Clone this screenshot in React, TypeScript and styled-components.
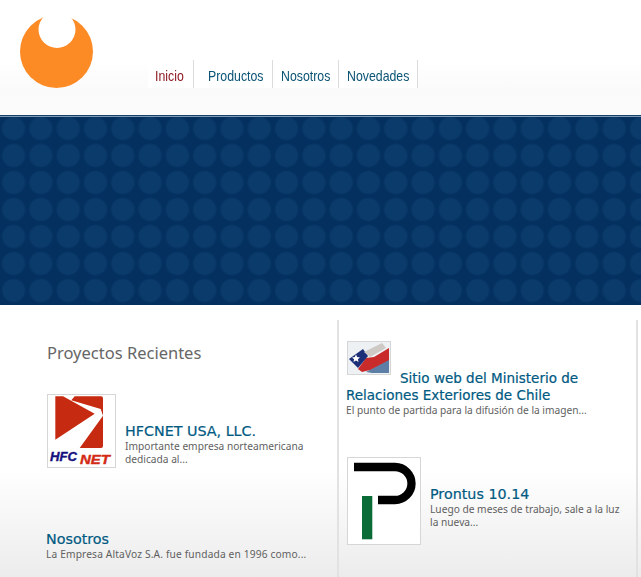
import React from 'react';
import styled, { createGlobalStyle } from 'styled-components';

const GlobalStyle = createGlobalStyle`
  html, body {
    margin: 0;
    padding: 0;
    background: #fff;
    overflow: hidden;
  }
  body {
    font-family: "DejaVu Sans", sans-serif;
  }
`;

const Page = styled.div`
  width: 641px;
  height: 577px;
  display: flex;
  flex-direction: column;
  overflow: hidden;
`;

const Header = styled.header`
  height: 115px;
  flex: none;
  display: flex;
  align-items: flex-start;
  background: linear-gradient(#fff 0, #fff 60px, #fafafa 92px, #fbfbfb 115px);
`;

const LogoBox = styled.a`
  width: 148px;
  height: 92px;
  flex: none;
  display: flex;
  padding: 15px 0 0 20px;
  box-sizing: border-box;
`;

const Nav = styled.nav`
  display: flex;
  margin-top: 60px;
  height: 28px;
  background: #fff;
`;

const NavItem = styled.a<{ $active?: boolean; $left: number; $width: number }>`
  width: ${(p) => p.$width}px;
  box-sizing: border-box;
  display: flex;
  align-items: center;
  padding: 3px 0 0 ${(p) => p.$left}px;
  border-right: 1px solid #dcdcdc;
  font-family: "Liberation Sans", sans-serif;
  font-size: 14.5px;
  color: ${(p) => (p.$active ? '#8e1b22' : '#0b5475')};
`;

// the original face is a narrow grotesque, none is installed
const NavLabel = styled.span`
  display: inline-block;
  transform: scaleX(0.85);
  transform-origin: left center;
  white-space: nowrap;
`;

const Band = styled.div`
  height: 190px;
  flex: none;
  box-sizing: border-box;
  border-top: 1px solid #17406b;
  box-shadow: inset 0 1px 0 #7f9ab5;
  background-color: #03305f;
  background-image: radial-gradient(circle at 13.6px 13.5px, #0b3b6b 10.5px, #03305f 12.5px);
  background-size: 27.3px 27px;
  background-position: 0 -1px;
`;

const Content = styled.main`
  flex: 1;
  display: flex;
  padding-top: 15px;
  background: linear-gradient(#fff 0, #fff 165px, #ececec 272px);
`;

const LeftColumn = styled.section`
  width: 337px;
  flex: none;
  box-sizing: border-box;
  padding: 23px 20px 0 46px;
`;

const RightColumn = styled.section`
  width: 301px;
  flex: none;
  box-sizing: border-box;
  padding: 21px 10px 0 7px;
  border-left: 2px solid #e2e2e2;
  border-right: 2px solid #e2e2e2;
`;

const Heading = styled.h2`
  margin: 0 0 31px 1px;
  font-family: "Noto Sans", sans-serif;
  font-size: 16.5px;
  line-height: 20px;
  font-weight: 400;
  color: #666;
`;

const Story = styled.article<{ $top?: number; $left?: number }>`
  display: flex;
  align-items: flex-start;
  gap: 9px;
  margin: ${(p) => p.$top ?? 0}px 0 0 ${(p) => p.$left ?? 0}px;
`;

const StoryText = styled.div`
  padding-top: 29px;
`;

const Thumb = styled.div<{ $w: number; $h: number }>`
  width: ${(p) => p.$w}px;
  height: ${(p) => p.$h}px;
  flex: none;
  box-sizing: border-box;
  border: 1px solid #d6d6d6;
  background: #fff;
  display: flex;
`;

const InlineThumb = styled(Thumb)`
  display: inline-flex;
  vertical-align: 9px;
  margin: 0 9px 0 1px;
`;

const Title = styled.h3<{ $size?: number }>`
  margin: 0;
  font-family: "DejaVu Sans", sans-serif;
  font-size: ${(p) => p.$size ?? 14.3}px;
  line-height: 17px;
  font-weight: 400;
  color: #005a82;
  -webkit-text-stroke: 0.2px #005a82;
`;

const Desc = styled.p<{ $spacing?: number }>`
  margin: 0;
  font-family: "Noto Sans", sans-serif;
  font-size: 10.2px;
  line-height: 13px;
  letter-spacing: ${(p) => p.$spacing ?? 0}px;
  color: #5f5f5f;
`;

const Logo = () => (
  <svg width="74" height="74" viewBox="0 0 74 74">
    <circle cx="36.5" cy="36.5" r="36.5" fill="#fc8a25" />
    <circle cx="37" cy="14.5" r="18.5" fill="#fff" />
  </svg>
);

const HfcLogo = () => (
  <svg width="67" height="72" viewBox="0 0 67 72">
    <path d="M7.300 1.300H15L46.700 18.700 7.300 44.700z" fill="#c62a10" />
    <path d="M26.700 1.300H53q2 0 2 2V51q0 2-2 2H31.700L55 20.700 52.700 14 23.300 5.300z" fill="#c62a10" />
    <text x="2" y="66" textLength="27" lengthAdjust="spacingAndGlyphs" fontFamily="Liberation Sans, sans-serif" fontWeight="700" fontStyle="italic" fontSize="13.500" fill="#15107e" stroke="#15107e" strokeWidth="0.4">HFC</text>
    <text x="32" y="68.500" textLength="30" lengthAdjust="spacingAndGlyphs" fontFamily="Liberation Sans, sans-serif" fontWeight="700" fontStyle="italic" fontSize="13.500" fill="#d32a16" stroke="#d32a16" strokeWidth="0.4">NET</text>
  </svg>
);

const ChileLogo = () => (
  <svg width="42" height="32" viewBox="0 0 42 32">
    <defs>
      <filter id="soft">
        <feGaussianBlur stdDeviation="0.4" />
      </filter>
    </defs>
    <rect width="42" height="32" fill="#eef1f4" />
    <g filter="url(#soft)">
      <path d="M18 30 41 17V31H24z" fill="#5d7fa6" />
      <path d="M10 27 18 16 26 15 41 6V18L22 28 14 30z" fill="#c92b2b" />
      <path d="M1 17 15 7 20 14 10 26z" fill="#1b2f78" />
      <path d="M16 10 34 1 38 6 22 15z" fill="#cfc9c6" />
      <path d="M8 12.500l1.200 2.600 2.800.3-2.100 1.900.6 2.800-2.500-1.500-2.500 1.500.6-2.800-2.100-1.900 2.800-.3z" fill="#fff" />
    </g>
  </svg>
);

const ProntusLogo = () => (
  <svg width="72" height="86" viewBox="0 0 72 86">
    <path d="M6 9H47a16.500 16.500 0 0 1 0 33H30" fill="none" stroke="#000" strokeWidth="8.300" />
    <rect x="14" y="38" width="10.300" height="43.300" fill="#0a6b36" />
  </svg>
);

const App: React.FC = () => {
  return (
    <Page>
      <GlobalStyle />
      <Header>
        <LogoBox>
          <Logo />
        </LogoBox>
        <Nav>
          <NavItem $active $left={7} $width={46}><NavLabel>Inicio</NavLabel></NavItem>
          <NavItem $left={14} $width={79}><NavLabel>Productos</NavLabel></NavItem>
          <NavItem $left={8} $width={66}><NavLabel>Nosotros</NavLabel></NavItem>
          <NavItem $left={8} $width={79}><NavLabel>Novedades</NavLabel></NavItem>
        </Nav>
      </Header>
      <Band />
      <Content>
        <LeftColumn>
          <Heading>Proyectos Recientes</Heading>
          <Story $left={1}>
            <Thumb $w={69} $h={74}>
              <HfcLogo />
            </Thumb>
            <StoryText>
              <Title>HFCNET USA, LLC.</Title>
              <Desc>Importante empresa norteamericana dedicada al...</Desc>
            </StoryText>
          </Story>
          <Story $top={63}>
            <div>
              <Title>Nosotros</Title>
              <Desc $spacing={0.15}>La Empresa AltaVoz S.A. fue fundada en 1996 como...</Desc>
            </div>
          </Story>
        </LeftColumn>
        <RightColumn>
          <Title $size={13.5}>
            <InlineThumb $w={44} $h={34}>
              <ChileLogo />
            </InlineThumb>
            Sitio web del Ministerio de Relaciones Exteriores de Chile
          </Title>
          <Desc>El punto de partida para la difusión de la imagen...</Desc>
          <Story $top={40} $left={1}>
            <Thumb $w={74} $h={88}>
              <ProntusLogo />
            </Thumb>
            <StoryText>
              <Title>Prontus 10.14</Title>
              <Desc>Luego de meses de trabajo, sale a la luz la nueva...</Desc>
            </StoryText>
          </Story>
        </RightColumn>
      </Content>
    </Page>
  );
};

export default App;
